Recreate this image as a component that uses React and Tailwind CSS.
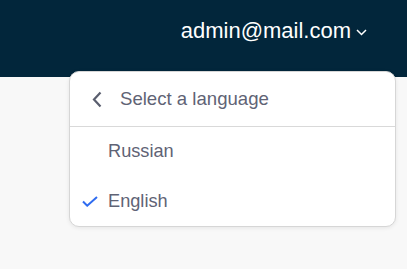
export default function App() {
  return (
    <div className="relative w-[407px] h-[269px] bg-[#f8f8f8] overflow-hidden" style={{ fontFamily: '"Liberation Sans", Arial, sans-serif' }}>
      <header className="h-[77px] bg-[#02263b] flex justify-end items-start pt-[17px] pr-[40px]">
        <div className="flex items-center text-white text-[22px] leading-[28px]">
          <span>admin@mail.com</span>
          <svg width="11" height="7" viewBox="0 0 11 7" className="ml-[5px] mt-[2px]" fill="none" stroke="white" strokeWidth="1.5">
            <path d="M1 1l4.5 4.5L10 1" />
          </svg>
        </div>
      </header>
      <div className="absolute left-[69px] top-[71px] w-[327px] bg-white border border-[#d6d6d6] rounded-[10px] shadow-[0_1px_4px_rgba(0,0,0,0.08)]">
        <div className="h-[55px] flex items-center border-b border-[#d9d9d9]">
          <svg width="10" height="17" viewBox="0 0 10 17" className="ml-[22px]" fill="none" stroke="#5a5e6e" strokeWidth="2.2">
            <path d="M8.5 1.5L2 8.5l6.5 7" />
          </svg>
          <span className="ml-[18px] text-[18.6px] text-[#5f6375]">Select a language</span>
        </div>
        <div className="h-[50px] flex items-center pl-[38px] text-[18.2px] text-[#5f6375]">Russian</div>
        <div className="h-[49px] flex items-center text-[18.2px] text-[#5f6375]">
          <svg width="16" height="11" viewBox="0 0 16 11" className="ml-[12px]" fill="none" stroke="#2f6cf0" strokeWidth="2">
            <path d="M1 5.5l4.2 4.2L15 1" />
          </svg>
          <span className="ml-[10px]">English</span>
        </div>
      </div>
    </div>
  );
}
